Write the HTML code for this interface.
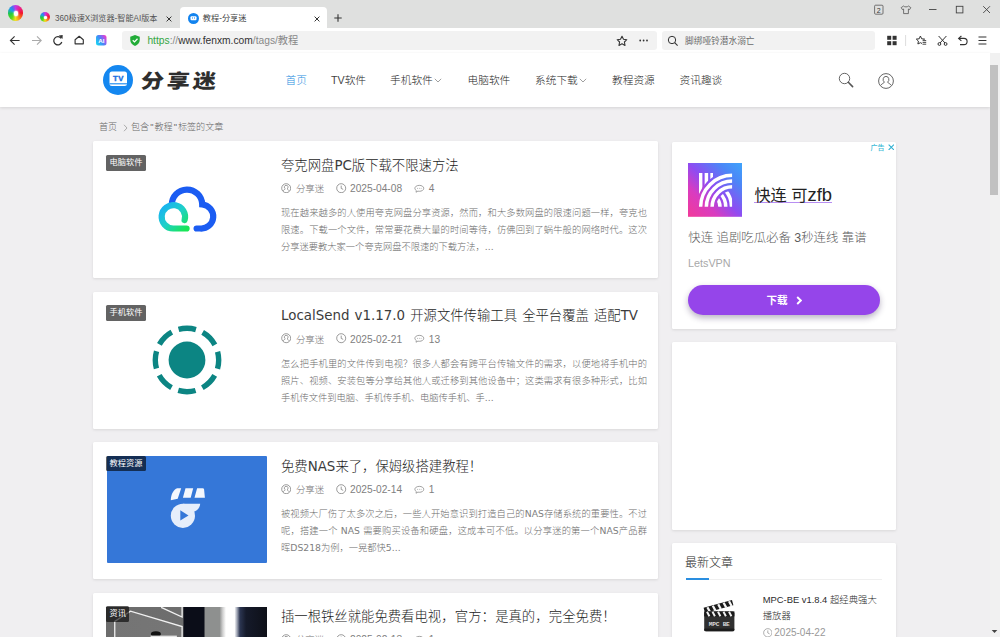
<!DOCTYPE html>
<html lang="zh-CN">
<head>
<meta charset="utf-8">
<title>教程-分享迷</title>
<style>
*{margin:0;padding:0;box-sizing:border-box}
html,body{width:1000px;height:637px;overflow:hidden;background:#f0eff1}
body{position:relative;font-family:"Liberation Sans","Noto Sans CJK SC",sans-serif;color:#333;-webkit-font-smoothing:antialiased}
.abs{position:absolute}
.t{position:absolute;white-space:nowrap;line-height:1}
/* browser chrome */
#tabbar{left:0;top:0;width:1000px;height:28px;background:#dfe0df}
#toolbar{left:0;top:28px;width:1000px;height:25.5px;background:#fff;border-bottom:1px solid #e4e4e4}
#acttab{left:180px;top:7px;width:147px;height:21px;background:#fff;border-radius:4px 4px 0 0}
#addr{left:122px;top:31.3px;width:534.5px;height:18.6px;background:#f2f2f2;border-radius:3px}
#sbox{left:662.4px;top:31.3px;width:213px;height:18.6px;background:#f2f2f2;border-radius:3px}
/* page */
#header{left:0;top:53px;width:990px;height:54px;background:#fff;box-shadow:0 1px 3px rgba(0,0,0,.12)}
#scroll{left:990px;top:53px;width:10px;height:584px;background:#f1f1f1}
#thumb{left:990px;top:65px;width:8px;height:130px;background:#c1c1c1}
.card{position:absolute;background:#fff;border-radius:1.5px;box-shadow:0 1px 3px rgba(0,0,0,.10)}
.post{left:92.7px;width:565.4px;height:137.2px;overflow:hidden}
.nav{font-size:10.7px;top:75px;color:#262626;font-weight:300}
.tag{position:absolute;height:15.8px;background:rgba(0,0,0,.61);color:#fff;font-size:8.2px;line-height:15.8px;padding:0 3.4px;border-radius:1.5px;white-space:nowrap}
.la{font-size:13.4px;font-weight:400;color:#3c3c3c}
.p{letter-spacing:.3px}
.title{font-size:13.35px;word-spacing:.9px;color:#1c1c1c;font-weight:300;margin-top:.3px;font-family:"DejaVu Sans","Noto Sans CJK SC",sans-serif}
.meta{font-size:9.4px;color:#727272;font-weight:300}
.meta.n{font-size:10.2px;margin-top:.4px;color:#808080}
.desc i{font-style:normal;font-weight:400;color:#808080}
.desc{position:absolute;width:366px;font-size:9.27px;color:#6c6c6c;font-weight:300;font-family:"DejaVu Sans","Noto Sans CJK SC",sans-serif}
.ln{height:17px;line-height:17px;white-space:nowrap;text-align:justify;text-align-last:justify}
.ln.last{text-align-last:left}
</style>
</head>
<body>
<!-- browser chrome -->
<div class="abs" id="tabbar"></div>
<div class="abs" id="acttab"></div>
<div class="abs" id="toolbar"></div>
<div class="abs" id="addr"></div>
<div class="abs" id="sbox"></div>


<!-- 360 logo -->
<div class="abs" style="left:7.8px;top:5.1px;width:15.6px;height:15.6px;border-radius:50%;background:conic-gradient(from 0deg,#c436e6 0,#e8208c 12%,#f2152e 25%,#f7681a 36%,#f5e01c 50%,#5fd81e 60%,#22cc3c 72%,#1fa0e0 84%,#3a7af0 91%,#c436e6 100%)"></div>
<div class="abs" style="left:13.5px;top:11.3px;width:4.8px;height:4.8px;border-radius:50%;background:#fff;box-shadow:0 0 1.5px 0.5px rgba(255,255,255,.8)"></div>
<!-- inactive tab -->
<div class="abs" style="left:39.9px;top:11.9px;width:10.3px;height:10.3px;border-radius:50%;background:conic-gradient(from 0deg,#c436e6 0,#e8208c 12%,#f2152e 25%,#f7681a 36%,#f5e01c 50%,#5fd81e 60%,#22cc3c 72%,#1fa0e0 84%,#3a7af0 91%,#c436e6 100%)"></div>
<div class="abs" style="left:43.6px;top:15.7px;width:3.2px;height:3.2px;border-radius:50%;background:#fff;box-shadow:0 0 1px .3px rgba(255,255,255,.8)"></div>
<div class="t" style="left:55px;top:14.6px;font-size:8.15px;color:#555">360极速X浏览器-智能AI版本</div>
<svg class="abs" style="left:166px;top:15.5px" width="6" height="6" viewBox="0 0 6 6"><path d="M.6.6 5.4 5.4M5.4.6.6 5.4" stroke="#333" stroke-width="1" fill="none"/></svg>
<!-- active tab content -->
<svg class="abs" style="left:187.5px;top:12.5px" width="11" height="11" viewBox="0 0 22 22"><circle cx="11" cy="11" r="11" fill="#1283ee"/><rect x="5" y="6.5" width="12" height="8" rx="2" fill="#fff"/><rect x="8" y="9" width="2" height="2" fill="#1283ee"/><rect x="12" y="9" width="2" height="2" fill="#1283ee"/></svg>
<div class="t" style="left:202.8px;top:15px;font-size:8.2px;color:#444">教程-分享迷</div>
<svg class="abs" style="left:313.5px;top:15.5px" width="6" height="6" viewBox="0 0 6 6"><path d="M.6.6 5.4 5.4M5.4.6.6 5.4" stroke="#333" stroke-width="1" fill="none"/></svg>
<svg class="abs" style="left:334px;top:14px" width="8" height="8" viewBox="0 0 8 8"><path d="M4 .3V7.7M.3 4H7.7" stroke="#333" stroke-width="1.1" fill="none"/></svg>
<!-- window controls -->
<svg class="abs" style="left:870px;top:2px" width="125" height="16" viewBox="0 0 125 16">
 <rect x="4.6" y="3.2" width="8.4" height="9" rx="1" fill="none" stroke="#555" stroke-width=".8"/>
 <text x="8.8" y="10.6" font-size="7" font-family="Liberation Sans, sans-serif" text-anchor="middle" fill="#333">2</text>
 <path d="M33.6 4 31.2 5.6 32.4 7.6 33.6 7V11.6H38.4V7L39.6 7.6 40.8 5.6 38.4 4C37.6 5.2 34.4 5.2 33.6 4Z" fill="none" stroke="#555" stroke-width=".8" stroke-linejoin="round"/>
 <path d="M59 7.5H66.5" stroke="#444" stroke-width=".9"/>
 <rect x="86.3" y="4.3" width="6.6" height="6.6" fill="none" stroke="#444" stroke-width=".9"/>
 <path d="M113.2 4.2 120 11M120 4.2 113.2 11" stroke="#444" stroke-width=".9" fill="none"/>
</svg>
<!-- toolbar icons -->
<svg class="abs" style="left:0;top:30px" width="120" height="22" viewBox="0 0 120 22">
 <path d="M19.6 10.5H10.6M14.6 6.3 10.4 10.5 14.6 14.7" stroke="#333" stroke-width="1.1" fill="none"/>
 <path d="M32 10.5H41M37 6.3 41.2 10.5 37 14.7" stroke="#aaa" stroke-width="1.1" fill="none"/>
 <path d="M61.2 8.4A4.1 4.1 0 1 0 61.8 12" stroke="#333" stroke-width="1.25" fill="none"/><path d="M58.8 5.4 62.7 5 62.5 9Z" fill="#333"/>
 <path d="M75.1 9.8 79.2 6.3 83.3 9.8V13.8H75.1Z" stroke="#333" stroke-width="1.15" fill="none" stroke-linejoin="round"/>
</svg>
<svg class="abs" style="left:96px;top:35px" width="10.5" height="10.5" viewBox="0 0 21 21"><defs><linearGradient id="ai" x1="0" y1=".8" x2="1" y2=".2"><stop offset="0" stop-color="#19d6f2"/><stop offset=".45" stop-color="#3f8df6"/><stop offset=".75" stop-color="#9a5cf0"/><stop offset="1" stop-color="#f23ec0"/></linearGradient></defs><rect width="21" height="21" rx="5" fill="url(#ai)"/><text x="10.5" y="15.4" font-size="12.5" font-weight="bold" font-family="Liberation Sans, sans-serif" text-anchor="middle" fill="#fff">AI</text></svg>
<!-- address content -->
<svg class="abs" style="left:129.5px;top:35px" width="10" height="11" viewBox="0 0 20 22"><path d="M10 0 19.5 3.5V10C19.5 16 15 20 10 22 5 20 .5 16 .5 10V3.5Z" fill="#22ac38"/><path d="M5.5 10.5 9 14 15 7.5" stroke="#fff" stroke-width="2.4" fill="none"/></svg>
<div class="t" style="left:147.4px;top:36.2px;font-size:10.25px;color:#888"><span style="color:#35a642">https</span>://<span style="color:#333">www.fenxm.com</span>/tags/教程</div>
<svg class="abs" style="left:616px;top:35px" width="36" height="12" viewBox="0 0 36 12">
 <path d="M6 1.2 7.5 4.3 10.8 4.7 8.4 7 9 10.4 6 8.8 3 10.4 3.6 7 1.2 4.7 4.5 4.3Z" fill="none" stroke="#333" stroke-width="1.1" stroke-linejoin="round"/>
 <circle cx="24.2" cy="5.5" r=".9" fill="#333"/><circle cx="27.6" cy="5.5" r=".9" fill="#333"/><circle cx="31" cy="5.5" r=".9" fill="#333"/>
</svg>
<svg class="abs" style="left:667px;top:35px" width="12" height="12" viewBox="0 0 12 12"><circle cx="5" cy="5" r="3.7" fill="none" stroke="#333" stroke-width="1"/><path d="M7.7 7.7 10.6 10.6" stroke="#333" stroke-width="1.1"/></svg>
<div class="t" style="left:685px;top:36.6px;font-size:8.7px;color:#6a6a6a">脚绑哑铃潜水溺亡</div>
<svg class="abs" style="left:885px;top:34px" width="105" height="14" viewBox="0 0 105 14">
 <rect x="2.2" y="1.8" width="4" height="4" fill="#333"/><rect x="7.6" y="1.8" width="4" height="4" fill="#333"/><rect x="2.2" y="7.2" width="4" height="4" fill="#333"/><rect x="7.6" y="7.2" width="4" height="4" fill="#333"/>
 <path d="M20.6 1V12" stroke="#ddd" stroke-width="1"/>
 <path d="M35.4 2 36.7 4.8 39.6 5.1 37.5 7.1 38 10 35.4 8.7 32.9 10 33.4 7.1 31.3 5.1 34.2 4.8Z" fill="none" stroke="#333" stroke-width="1" stroke-linejoin="round"/><rect x="37" y="6" width="4.4" height="4.6" fill="#fff"/><path d="M37.6 6.6H41.2M37.6 8.4H41.2M37.6 10.2H41.2" stroke="#333" stroke-width=".9"/>
 <path d="M53.6 2 60 9M61.4 2 55 9" stroke="#333" stroke-width="1" fill="none"/><circle cx="54.4" cy="10" r="1.4" fill="none" stroke="#333" stroke-width="1"/><circle cx="60.6" cy="10" r="1.4" fill="none" stroke="#333" stroke-width="1"/>
 <path d="M74 4.4H79A3 3 0 0 1 79 10.6H75" stroke="#333" stroke-width="1.1" fill="none"/><path d="M76.4 2 73.6 4.4 76.4 6.8" stroke="#333" stroke-width="1.1" fill="none"/>
 <path d="M93.5 3H101.4M93.5 6.5H101.4M93.5 10H101.4" stroke="#333" stroke-width="1.2"/>
</svg>
<!-- scrollbar arrow -->
<svg class="abs" style="left:991px;top:57px" width="7" height="5" viewBox="0 0 7 5"><path d="M3.5 1 6.3 4H.7Z" fill="#777"/></svg>

<!-- site header -->
<div class="abs" id="header"></div>
<div class="abs" id="scroll"></div>
<div class="abs" id="thumb"></div>


<!-- logo -->
<svg class="abs" style="left:103px;top:64.5px" width="30" height="30" viewBox="0 0 60 60"><circle cx="30" cy="30" r="30" fill="#1487f0"/><rect x="13" y="13" width="35" height="29" rx="5" fill="#fff"/><rect x="13" y="36.5" width="35" height="2.2" fill="#1487f0"/><text x="30.5" y="32" font-size="15.5" font-weight="bold" font-family="Liberation Sans, sans-serif" text-anchor="middle" fill="#1a6fe0" stroke="#1a6fe0" stroke-width=".8" textLength="21">TV</text></svg>
<div class="t" style="left:140.5px;top:69.5px;font-size:19.5px;font-weight:900;color:#2e2e2e;letter-spacing:2.3px;font-family:'Noto Sans CJK SC',sans-serif;transform:scaleX(1.19) skewX(-4deg);transform-origin:0 50%">分享迷</div>
<!-- nav -->
<div class="t nav" style="left:285.5px;color:#2a8ee0">首页</div>
<div class="t nav" style="left:331px"><span style="color:#444">TV</span>软件</div>
<div class="t nav" style="left:390px">手机软件</div>
<div class="t nav" style="left:467.5px">电脑软件</div>
<div class="t nav" style="left:535px">系统下载</div>
<div class="t nav" style="left:612px">教程资源</div>
<div class="t nav" style="left:679.5px">资讯趣谈</div>
<svg class="abs" style="left:434px;top:78px" width="8" height="5" viewBox="0 0 8 5"><path d="M.8.8 4 4 7.2.8" stroke="#888" stroke-width=".8" fill="none"/></svg>
<svg class="abs" style="left:579px;top:78px" width="8" height="5" viewBox="0 0 8 5"><path d="M.8.8 4 4 7.2.8" stroke="#888" stroke-width=".8" fill="none"/></svg>
<svg class="abs" style="left:837px;top:71px" width="18" height="18" viewBox="0 0 18 18"><circle cx="7.5" cy="7.5" r="5.2" fill="none" stroke="#555" stroke-width=".9"/><path d="M11.3 11.3 15.6 15.6" stroke="#555" stroke-width="1.6" stroke-linecap="round"/></svg>
<svg class="abs" style="left:877px;top:71.5px" width="18" height="18" viewBox="0 0 18 18"><circle cx="9" cy="9" r="7.4" fill="none" stroke="#555" stroke-width=".9"/><path d="M9 4.4A2.8 3.1 0 0 1 10.6 10.1C11 11.3 13.4 11.6 14 13.2M9 4.4A2.8 3.1 0 0 0 7.4 10.1C7 11.3 4.6 11.6 4 13.2" fill="none" stroke="#555" stroke-width=".9"/></svg>
<!-- breadcrumb -->
<div class="t" style="left:99px;top:122.8px;font-size:9.1px;color:#6a6a6a;font-weight:300">首页</div>
<svg class="abs" style="left:122.5px;top:123.6px" width="5" height="8" viewBox="0 0 5 8"><path d="M1 .8 4 4 1 7.2" stroke="#999" stroke-width=".8" fill="none"/></svg>
<div class="t" style="left:131px;top:122.8px;font-size:9.1px;color:#6a6a6a;font-weight:300">包含<span style="padding:0 1px">"</span>教程<span style="padding:0 1px">"</span>标签的文章</div>

<!-- cards -->
<div class="card post" style="top:141.2px">
<svg class="abs" style="left:57.3px;top:39px" width="74" height="58" viewBox="150 180 74 58"><defs><linearGradient id="cg" x1="0" y1="0" x2="1" y2="1"><stop offset="0" stop-color="#18b0f5"/><stop offset=".5" stop-color="#1fd0c8"/><stop offset="1" stop-color="#19e655"/></linearGradient></defs>
<path d="M171.8 205A15.2 15.2 0 0 1 202.2 204.5 11.7 11.7 0 0 1 200.2 228.5H196.6" fill="none" stroke="#1b5cf2" stroke-width="6.2" stroke-linecap="round"/>
<circle cx="173.2" cy="216.8" r="14" fill="#fff"/>
<path d="M184.6 220A11.7 11.7 0 1 0 173.2 228.5H186.6" fill="none" stroke="url(#cg)" stroke-width="6.2" stroke-linecap="round"/></svg>
<div class="tag" style="left:13.5px;top:13.7px">电脑软件</div>
<div class="t title" style="left:188.3px;top:17.5px">夸克网盘<span class="la">PC</span>版下载不限速方法</div>
<svg class="abs" style="left:188.1px;top:41.6px" width="10.4" height="10.4" viewBox="0 0 18 18"><circle cx="9" cy="9" r="7.8" fill="none" stroke="#8a8a8a" stroke-width="1.5"/><path d="M9 4.2A2.8 3 0 0 1 10.6 9.9C11 11 13.4 11.4 14 13.4M9 4.2A2.8 3 0 0 0 7.4 9.9C7 11 4.6 11.4 4 13.4" fill="none" stroke="#8a8a8a" stroke-width="1.5"/></svg><div class="t meta" style="left:203.3px;top:42.9px">分享迷</div><svg class="abs" style="left:243.6px;top:41.6px" width="10.4" height="10.4" viewBox="0 0 18 18"><circle cx="9" cy="9" r="7.8" fill="none" stroke="#8a8a8a" stroke-width="1.5"/><path d="M9 4.5V9.4L12.4 11" fill="none" stroke="#8a8a8a" stroke-width="1.5"/></svg><div class="t meta n" style="left:257.3px;top:42.5px">2025-04-08</div><svg class="abs" style="left:321.8px;top:42.6px" width="10.6" height="9.5" viewBox="0 0 20 18"><path d="M10 2.6C5.2 2.6 1.6 4.9 1.6 8.2 1.6 10 2.7 11.5 4.4 12.5L3.8 15.6 7.4 13.5C8.2 13.7 9.1 13.8 10 13.8 14.8 13.8 18.4 11.5 18.4 8.2 18.4 4.9 14.8 2.6 10 2.6Z" fill="none" stroke="#8a8a8a" stroke-width="1.5" stroke-linejoin="round"/><circle cx="6.6" cy="8.2" r=".9" fill="#8a8a8a"/><circle cx="10" cy="8.2" r=".9" fill="#8a8a8a"/><circle cx="13.4" cy="8.2" r=".9" fill="#8a8a8a"/></svg><div class="t meta n" style="left:336.1px;top:42.5px">4</div>
<div class="desc" style="left:188.3px;top:62.6px"><div class="ln">现在越来越多的人使用夸克网盘分享资源，然而，和大多数网盘的限速问题一样，夸克也</div><div class="ln">限速。下载一个文件，常常要花费大量的时间等待，仿佛回到了蜗牛般的网络时代。这次</div><div class="ln last">分享迷要教大家一个夸克网盘不限速的下载方法，<i>...</i></div></div>
</div>
<div class="card post" style="top:291.8px">
<svg class="abs" style="left:57.5px;top:31.2px" width="74" height="74" viewBox="-37 -37 74 74"><circle r="18.4" fill="#0c8583"/><circle r="31.7" fill="none" stroke="#0c8583" stroke-width="5.4" stroke-dasharray="17.6 7.3" stroke-dashoffset="8.8"/></svg>
<div class="tag" style="left:13.5px;top:13.7px">手机软件</div>
<div class="t title" style="left:188.3px;top:17px"><span class="la">LocalSend v1.17.0</span> 开源文件传输工具 全平台覆盖 适配<span class="la">TV</span></div>
<svg class="abs" style="left:188.1px;top:41.6px" width="10.4" height="10.4" viewBox="0 0 18 18"><circle cx="9" cy="9" r="7.8" fill="none" stroke="#8a8a8a" stroke-width="1.5"/><path d="M9 4.2A2.8 3 0 0 1 10.6 9.9C11 11 13.4 11.4 14 13.4M9 4.2A2.8 3 0 0 0 7.4 9.9C7 11 4.6 11.4 4 13.4" fill="none" stroke="#8a8a8a" stroke-width="1.5"/></svg><div class="t meta" style="left:203.3px;top:42.9px">分享迷</div><svg class="abs" style="left:243.6px;top:41.6px" width="10.4" height="10.4" viewBox="0 0 18 18"><circle cx="9" cy="9" r="7.8" fill="none" stroke="#8a8a8a" stroke-width="1.5"/><path d="M9 4.5V9.4L12.4 11" fill="none" stroke="#8a8a8a" stroke-width="1.5"/></svg><div class="t meta n" style="left:257.3px;top:42.5px">2025-02-21</div><svg class="abs" style="left:321.8px;top:42.6px" width="10.6" height="9.5" viewBox="0 0 20 18"><path d="M10 2.6C5.2 2.6 1.6 4.9 1.6 8.2 1.6 10 2.7 11.5 4.4 12.5L3.8 15.6 7.4 13.5C8.2 13.7 9.1 13.8 10 13.8 14.8 13.8 18.4 11.5 18.4 8.2 18.4 4.9 14.8 2.6 10 2.6Z" fill="none" stroke="#8a8a8a" stroke-width="1.5" stroke-linejoin="round"/><circle cx="6.6" cy="8.2" r=".9" fill="#8a8a8a"/><circle cx="10" cy="8.2" r=".9" fill="#8a8a8a"/><circle cx="13.4" cy="8.2" r=".9" fill="#8a8a8a"/></svg><div class="t meta n" style="left:336.1px;top:42.5px">13</div>
<div class="desc" style="left:188.3px;top:63.2px"><div class="ln">怎么把手机里的文件传到电视？很多人都会有跨平台传输文件的需求，以便地将手机中的</div><div class="ln">照片、视频、安装包等分享给其他人或迁移到其他设备中；这类需求有很多种形式，比如</div><div class="ln last">手机传文件到电脑、手机传手机、电脑传手机、手<i>...</i></div></div>
</div>
<div class="card post" style="top:442.0px">
<div class="abs" style="left:13.9px;top:14.1px;width:160.6px;height:106.6px;background:#3577d8;border-radius:1px"></div>
<svg class="abs" style="left:75.3px;top:43px" width="40" height="46" viewBox="168 485 40 46"><path d="M170.8 500.3C171 494 173.6 489.4 177.3 488.2H181.2L177.7 498.7Z M185.5 488.2H193.2L190.7 497.7H182.9Z M197.1 488.2H202.6Q204 488.2 204.1 489.6L204.9 497.7H194.5Z" fill="#f4f7fd"/><circle cx="182.9" cy="515.8" r="12.1" fill="#e6eefb"/><path d="M182.9 503.7H200.2C199.8 507.6 198 510 194.6 511.6L186 512Z" fill="#e6eefb"/><path d="M180.3 510.2 188.5 515.4 180.3 520.6Z" fill="#3577d8"/></svg>
<div class="tag" style="left:13.5px;top:13.7px">教程资源</div>
<div class="t title" style="left:188.3px;top:17.9px">免费<span class="la">NAS</span>来了，保姆级搭建教程！</div>
<svg class="abs" style="left:188.1px;top:41.6px" width="10.4" height="10.4" viewBox="0 0 18 18"><circle cx="9" cy="9" r="7.8" fill="none" stroke="#8a8a8a" stroke-width="1.5"/><path d="M9 4.2A2.8 3 0 0 1 10.6 9.9C11 11 13.4 11.4 14 13.4M9 4.2A2.8 3 0 0 0 7.4 9.9C7 11 4.6 11.4 4 13.4" fill="none" stroke="#8a8a8a" stroke-width="1.5"/></svg><div class="t meta" style="left:203.3px;top:42.9px">分享迷</div><svg class="abs" style="left:243.6px;top:41.6px" width="10.4" height="10.4" viewBox="0 0 18 18"><circle cx="9" cy="9" r="7.8" fill="none" stroke="#8a8a8a" stroke-width="1.5"/><path d="M9 4.5V9.4L12.4 11" fill="none" stroke="#8a8a8a" stroke-width="1.5"/></svg><div class="t meta n" style="left:257.3px;top:42.5px">2025-02-14</div><svg class="abs" style="left:321.8px;top:42.6px" width="10.6" height="9.5" viewBox="0 0 20 18"><path d="M10 2.6C5.2 2.6 1.6 4.9 1.6 8.2 1.6 10 2.7 11.5 4.4 12.5L3.8 15.6 7.4 13.5C8.2 13.7 9.1 13.8 10 13.8 14.8 13.8 18.4 11.5 18.4 8.2 18.4 4.9 14.8 2.6 10 2.6Z" fill="none" stroke="#8a8a8a" stroke-width="1.5" stroke-linejoin="round"/><circle cx="6.6" cy="8.2" r=".9" fill="#8a8a8a"/><circle cx="10" cy="8.2" r=".9" fill="#8a8a8a"/><circle cx="13.4" cy="8.2" r=".9" fill="#8a8a8a"/></svg><div class="t meta n" style="left:336.1px;top:42.5px">1</div>
<div class="desc" style="left:188.3px;top:63px"><div class="ln">被视频大厂伤了太多次之后，一些人开始意识到打造自己的<i>NAS</i>存储系统的重要性。不过</div><div class="ln">呢，搭建一个 <i>NAS</i> 需要购买设备和硬盘，这成本可不低。以分享迷的第一个<i>NAS</i>产品群</div><div class="ln last">晖<i>DS218</i>为例，一晃都快<i>5...</i></div></div>
</div>
<div class="card post" style="top:592.6px">
<div class="abs" style="left:13.4px;top:14px;width:161px;height:40px;background:linear-gradient(90deg,#6c6c6c 0,#6e6e6e 47.6%,#0b0d18 48.6%,#0b0d18 60.6%,#8e908f 61.8%,#8e908f 70.5%,#d0d0d0 72.5%,#fff 74.5%,#fff 79.8%,#9aa0b0 81.5%,#2c3652 83.2%,#151a2a 87%,#0e1018 100%)"></div>
<svg class="abs" style="left:13.4px;top:14px" width="90" height="31" viewBox="0 0 90 31"><path d="M8.75 31V14.4L24.5 4.2 76.1 19.6V31M55.1 .3 76.1 10V0" stroke="#f0f0f0" stroke-width="1.3" fill="none"/><path d="M24.5 4.2 76.1 19.6V31H8.75V14.4Z" fill="#fff" fill-opacity=".06"/><ellipse cx="49.9" cy="27" rx="5" ry="2.8" fill="#111"/><rect x="44.6" y="28.6" width="26.3" height="3" fill="#e4e4e4"/></svg>
<div class="tag" style="left:13.5px;top:13.7px">资讯</div>
<div class="t title" style="left:188.3px;top:16.8px">插一根铁丝就能免费看电视<span class="p">，</span>官方<span class="p">：</span>是真的<span class="p">，</span>完全免费！</div>
<svg class="abs" style="left:188.1px;top:41.6px" width="10.4" height="10.4" viewBox="0 0 18 18"><circle cx="9" cy="9" r="7.8" fill="none" stroke="#8a8a8a" stroke-width="1.5"/><path d="M9 4.2A2.8 3 0 0 1 10.6 9.9C11 11 13.4 11.4 14 13.4M9 4.2A2.8 3 0 0 0 7.4 9.9C7 11 4.6 11.4 4 13.4" fill="none" stroke="#8a8a8a" stroke-width="1.5"/></svg><div class="t meta" style="left:203.3px;top:42.9px">分享迷</div><svg class="abs" style="left:243.6px;top:41.6px" width="10.4" height="10.4" viewBox="0 0 18 18"><circle cx="9" cy="9" r="7.8" fill="none" stroke="#8a8a8a" stroke-width="1.5"/><path d="M9 4.5V9.4L12.4 11" fill="none" stroke="#8a8a8a" stroke-width="1.5"/></svg><div class="t meta n" style="left:257.3px;top:42.5px">2025-02-13</div><svg class="abs" style="left:321.8px;top:42.6px" width="10.6" height="9.5" viewBox="0 0 20 18"><path d="M10 2.6C5.2 2.6 1.6 4.9 1.6 8.2 1.6 10 2.7 11.5 4.4 12.5L3.8 15.6 7.4 13.5C8.2 13.7 9.1 13.8 10 13.8 14.8 13.8 18.4 11.5 18.4 8.2 18.4 4.9 14.8 2.6 10 2.6Z" fill="none" stroke="#8a8a8a" stroke-width="1.5" stroke-linejoin="round"/><circle cx="6.6" cy="8.2" r=".9" fill="#8a8a8a"/><circle cx="10" cy="8.2" r=".9" fill="#8a8a8a"/><circle cx="13.4" cy="8.2" r=".9" fill="#8a8a8a"/></svg><div class="t meta n" style="left:336.1px;top:42.5px">1</div>
</div>

<!-- sidebar -->
<div class="card" style="left:672px;top:141.5px;width:224.4px;height:187px"></div>
<div class="card" style="left:672px;top:342px;width:224.4px;height:187.5px"></div>
<div class="card" style="left:672px;top:543.2px;width:224.4px;height:188px"></div>

<!-- ad -->
<div class="t" style="left:870.6px;top:143.9px;font-size:7px;color:#3bbad6;font-weight:500">广告</div>
<svg class="abs" style="left:887.6px;top:143.8px" width="6.6" height="6.6" viewBox="0 0 8 8"><path d="M.8.8 7.2 7.2M7.2.8.8 7.2" stroke="#2fb0d2" stroke-width="1.3" fill="none"/></svg>
<svg class="abs" style="left:688.2px;top:163px" width="54.3" height="53.8" viewBox="0 0 54.3 53.8"><defs><linearGradient id="kg" x1="0" y1="1" x2="1" y2="0"><stop offset="0" stop-color="#f23a98"/><stop offset=".28" stop-color="#d93cc0"/><stop offset=".5" stop-color="#8e4cf2"/><stop offset=".78" stop-color="#4c86f7"/><stop offset="1" stop-color="#3ea4fb"/></linearGradient>
<clipPath id="kbox"><rect x="10.9" y="10.1" width="33.2" height="33.6"/></clipPath>
<mask id="kout"><rect width="55" height="55" fill="#fff"/><circle cx="44.5" cy="44.2" r="35.95" fill="#000"/></mask>
<clipPath id="kin"><circle cx="44.5" cy="44.2" r="16.35"/></clipPath></defs>
<rect width="54.3" height="53.8" fill="url(#kg)"/>
<g clip-path="url(#kbox)" fill="none" stroke="#fff" stroke-width="3.5">
<g mask="url(#kout)"><path d="M12.63 10V44M18.4 10V44M24.1 10V44"/></g>
<circle cx="44.5" cy="44.2" r="31.9"/><circle cx="44.5" cy="44.2" r="26.15"/><circle cx="44.5" cy="44.2" r="20.4"/>
<g clip-path="url(#kin)"><circle cx="18.9" cy="43.7" r="24.6"/><circle cx="18.9" cy="43.7" r="18.85"/><circle cx="18.9" cy="43.7" r="13.1"/></g>
</g></svg>
<div class="t" style="left:754.4px;top:185.2px;font-size:16.2px;color:#222;border-bottom:1.4px solid #b88ef2;padding-top:1.6px;line-height:16.4px;height:17.6px">快连 可<span style="font-size:18.4px;line-height:10px">zfb</span></div>
<div class="t" style="left:688.3px;top:231.6px;font-size:12.4px;color:#5c5c5c;font-weight:300">快连 追剧吃瓜必备 3秒连线 靠谱</div>
<div class="t" style="left:688px;top:258px;font-size:10.8px;color:#a8a8a8">LetsVPN</div>
<div class="abs" style="left:688.2px;top:285.4px;width:191.8px;height:29.3px;border-radius:15px;background:#9545ea;box-shadow:0 3px 6px rgba(40,20,70,.32)"></div>
<div class="t" style="left:766.5px;top:294.5px;font-size:10.6px;color:#fff;font-weight:700">下载</div>
<svg class="abs" style="left:796px;top:295.5px" width="6" height="9" viewBox="0 0 6 9"><path d="M1.2 1 4.8 4.5 1.2 8" stroke="#fff" stroke-width="1.9" fill="none"/></svg>
<!-- latest -->
<div class="t" style="left:685px;top:556.5px;font-size:12px;color:#2a2a2a;font-weight:300">最新文章</div>
<div class="abs" style="left:685.5px;top:578.6px;width:196.5px;height:1px;background:#efefef"></div>
<div class="abs" style="left:685.5px;top:578px;width:23.5px;height:1.5px;background:#2a8ee0"></div>
<div class="t" style="left:762.7px;top:595px;font-size:9.4px;color:#2c2c2c;font-weight:300">MPC-BE v1.8.4 超经典强大</div>
<div class="t" style="left:762.7px;top:610.5px;font-size:9.4px;color:#2c2c2c;font-weight:300">播放器</div>
<svg class="abs" style="left:762.5px;top:628.2px" width="9.6" height="9.6" viewBox="0 0 18 18"><circle cx="9" cy="9" r="7.8" fill="none" stroke="#999" stroke-width="1.5"/><path d="M9 4.5V9.4L12.4 11" fill="none" stroke="#999" stroke-width="1.5"/></svg>
<div class="t" style="left:774.3px;top:628.4px;font-size:10px;color:#999">2025-04-22</div>
<!-- mpc icon -->
<svg class="abs" style="left:702px;top:598px" width="34" height="35" viewBox="0 0 34 35"><path d="M1.6 9.8 30 2 31.4 7.2 3 15Z" fill="#1a1a1a"/><path d="M5.4 9.2 8 14M10.8 7.7 13.4 12.5M16.2 6.2 18.8 11M21.6 4.7 24.2 9.5M27 3.2 29.6 8" stroke="#f4f4f4" stroke-width="2.3"/><rect x="2.2" y="13.4" width="30.2" height="19.8" rx="2" fill="#303030"/><rect x="2.2" y="13.4" width="30.2" height="5" fill="#1a1a1a"/><path d="M5 13.8 7.4 18.2M10.5 13.8 12.9 18.2M16 13.8 18.4 18.2M21.5 13.8 23.9 18.2M27 13.8 29.4 18.2" stroke="#eee" stroke-width="2"/><rect x="2.2" y="30.6" width="30.2" height="2.6" rx="1.2" fill="#1c1c1c"/><text x="17.3" y="28.2" font-size="6.2" font-weight="bold" font-family="Liberation Mono, monospace" text-anchor="middle" fill="#d8d8d8" textLength="21">MPC BE</text></svg>
<svg class="abs" style="left:991px;top:628.5px" width="7" height="5" viewBox="0 0 7 5"><path d="M3.5 4 6.3 1H.7Z" fill="#444"/></svg>
</body>
</html>
